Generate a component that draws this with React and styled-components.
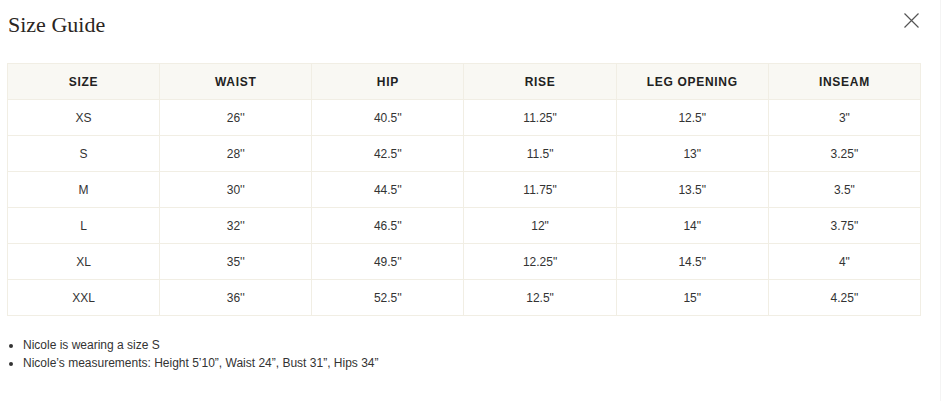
import React from "react";
import styled, { createGlobalStyle } from "styled-components";

const Global = createGlobalStyle`
  html, body { margin: 0; padding: 0; background: #fff; }
  body { font-family: "Liberation Sans", Arial, sans-serif; color: #333; }
`;

const Page = styled.div`
  width: 941px;
  height: 401px;
  box-sizing: border-box;
  border-right: 1px solid #f4f4f4;
  padding: 0 21px 0 7px;
`;

const Header = styled.div`
  display: flex;
  justify-content: space-between;
  align-items: flex-start;
  height: 63px;
`;

const Title = styled.h2`
  margin: 12px 0 0 1px;
  font-family: "Liberation Serif", "Times New Roman", serif;
  font-weight: 400;
  font-size: 22px;
  line-height: 26px;
  color: #2a2522;
`;

const Close = styled.button`
  margin-top: 13px;
  width: 15px;
  height: 15px;
  padding: 0;
  border: 0;
  background: none;
  display: flex;
  cursor: pointer;
`;

const Table = styled.table`
  width: 914px;
  border-collapse: collapse;
  table-layout: fixed;
`;

const Th = styled.th`
  height: 35px;
  padding: 0;
  background: #f9f8f3;
  border: 1px solid #f1eee4;
  font-size: 12px;
  font-weight: 700;
  letter-spacing: 0.7px;
  color: #222;
  text-align: center;
  vertical-align: middle;
`;

const Td = styled.td`
  height: 35px;
  padding: 0;
  border: 1px solid #f1eee4;
  font-size: 12px;
  color: #333;
  text-align: center;
  vertical-align: middle;
`;

const Notes = styled.ul`
  margin: 20px 0 0;
  padding-left: 16px;
  font-size: 12px;
  line-height: 18px;
  color: #333;
`;

const columns = ["SIZE", "WAIST", "HIP", "RISE", "LEG OPENING", "INSEAM"];
const rows = [
  ["XS", "26''", "40.5''", "11.25\"", "12.5\"", "3\""],
  ["S", "28''", "42.5''", "11.5\"", "13\"", "3.25\""],
  ["M", "30''", "44.5''", "11.75\"", "13.5\"", "3.5\""],
  ["L", "32''", "46.5''", "12\"", "14\"", "3.75\""],
  ["XL", "35''", "49.5''", "12.25\"", "14.5\"", "4\""],
  ["XXL", "36''", "52.5''", "12.5\"", "15\"", "4.25\""],
];

export default function App() {
  return (
    <>
      <Global />
      <Page>
        <Header>
          <Title>Size Guide</Title>
          <Close aria-label="Close">
            <svg width="15" height="15" viewBox="0 0 15 15">
              <path d="M0.5 0.5 L14.5 14.5 M14.5 0.5 L0.5 14.5" stroke="#555" strokeWidth="1.2" fill="none" />
            </svg>
          </Close>
        </Header>
        <Table>
          <thead>
            <tr>
              {columns.map((c) => (
                <Th key={c}>{c}</Th>
              ))}
            </tr>
          </thead>
          <tbody>
            {rows.map((r) => (
              <tr key={r[0]}>
                {r.map((v, i) => (
                  <Td key={i}>{v}</Td>
                ))}
              </tr>
            ))}
          </tbody>
        </Table>
        <Notes>
          <li>Nicole is wearing a size S</li>
          <li>Nicole’s measurements: Height 5’10”, Waist 24”, Bust 31”, Hips 34”</li>
        </Notes>
      </Page>
    </>
  );
}
